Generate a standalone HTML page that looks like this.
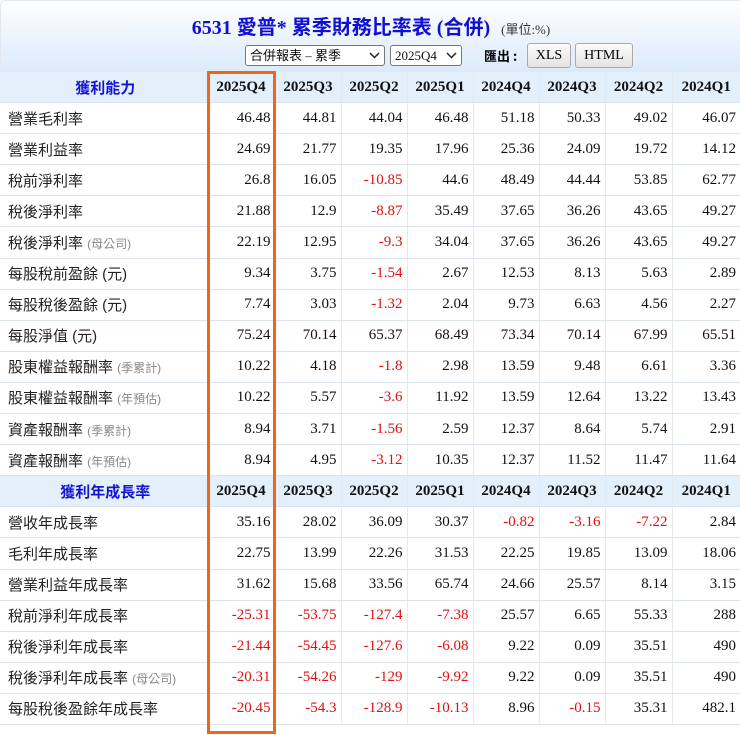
<!DOCTYPE html>
<html><head><meta charset="utf-8"><style>
body{margin:0;width:740px;height:735px;background:#fff;overflow:hidden;font-family:"Liberation Serif","Noto Serif CJK SC",serif;position:relative}
.top{position:absolute;left:0;top:0;width:740px;height:73px;background:linear-gradient(#fdfeff,#dbeafa);border-top:1px solid #e4e8ee;border-left:1px solid #e4e8ee;border-top-left-radius:6px;box-sizing:border-box}
.title{position:absolute;left:0;width:740px;top:10px;text-align:center;color:#1010d0;font-weight:bold;font-size:20px;font-family:"Liberation Serif","Noto Sans CJK TC",serif}
.title small{color:#333;font-weight:normal;font-size:13px;margin-left:6px}
.sel{position:absolute;top:44px;height:21px;border:1px solid #767676;border-radius:3px;background:#fff;font-size:13px;line-height:19px;padding-left:4px;box-sizing:border-box;color:#111;font-family:"Liberation Serif","Noto Sans CJK TC",serif}
.sel svg{position:absolute;right:4px;top:6px}
.btn{position:absolute;top:42px;height:25px;border:1px solid #aaa;border-radius:3px;background:linear-gradient(#fafafa,#e4e4e4);font-size:14px;line-height:23px;text-align:center;box-sizing:border-box}
table{position:absolute;left:0;top:72px;width:740px;border-collapse:collapse;table-layout:fixed}
td{height:30.1px;border-bottom:1px solid #dde3ea;border-right:1px solid #e5e9ee;padding:0 4px;text-align:right;font-size:15px;color:#111;white-space:nowrap;overflow:hidden}
td:first-child{text-align:left;font-family:"Liberation Sans","Noto Sans CJK TC",sans-serif;font-size:15px;color:#222;padding-left:8px}
td:last-child{border-right:none}
tr.h td{background:#e3effb;font-weight:bold;text-align:center;font-size:15px;color:#111}
tr.h td:first-child{text-align:center;color:#1515d0;font-weight:bold}
.r{color:#e01010}
.g{color:#888;font-size:12px}
.box{position:absolute;left:207px;top:71px;width:69px;height:663px;border:3px solid #f26418;box-sizing:border-box}
</style></head><body>
<div class="top">
<div class="title">6531 愛普* 累季財務比率表 (合併) <small>(單位:%)</small></div>
<div class="sel" style="left:244px;width:140px">合併報表 – 累季<svg width="11" height="7" viewBox="0 0 11 7"><path d="M1 1l4.5 4.5L10 1" fill="none" stroke="#222" stroke-width="1.5"/></svg></div>
<div class="sel" style="left:389px;width:72px">2025Q4<svg width="11" height="7" viewBox="0 0 11 7"><path d="M1 1l4.5 4.5L10 1" fill="none" stroke="#222" stroke-width="1.5"/></svg></div>
<div style="position:absolute;left:483px;top:45px;font-size:13px;font-weight:bold;font-family:'Noto Sans CJK TC',sans-serif">匯出 :</div>
<div class="btn" style="left:526px;width:44px">XLS</div>
<div class="btn" style="left:574px;width:58px">HTML</div>
</div>
<table>
<colgroup><col style="width:207px"><col style="width:68px"><col style="width:66px"><col style="width:66px"><col style="width:66px"><col style="width:66px"><col style="width:66px"><col style="width:67px"><col style="width:68px"></colgroup>
<tr class="h"><td>獲利能力</td><td>2025Q4</td><td>2025Q3</td><td>2025Q2</td><td>2025Q1</td><td>2024Q4</td><td>2024Q3</td><td>2024Q2</td><td>2024Q1</td></tr>
<tr><td>營業毛利率</td><td>46.48</td><td>44.81</td><td>44.04</td><td>46.48</td><td>51.18</td><td>50.33</td><td>49.02</td><td>46.07</td></tr>
<tr><td>營業利益率</td><td>24.69</td><td>21.77</td><td>19.35</td><td>17.96</td><td>25.36</td><td>24.09</td><td>19.72</td><td>14.12</td></tr>
<tr><td>稅前淨利率</td><td>26.8</td><td>16.05</td><td class="r">-10.85</td><td>44.6</td><td>48.49</td><td>44.44</td><td>53.85</td><td>62.77</td></tr>
<tr><td>稅後淨利率</td><td>21.88</td><td>12.9</td><td class="r">-8.87</td><td>35.49</td><td>37.65</td><td>36.26</td><td>43.65</td><td>49.27</td></tr>
<tr><td>稅後淨利率 <span class="g">(母公司)</span></td><td>22.19</td><td>12.95</td><td class="r">-9.3</td><td>34.04</td><td>37.65</td><td>36.26</td><td>43.65</td><td>49.27</td></tr>
<tr><td>每股稅前盈餘 (元)</td><td>9.34</td><td>3.75</td><td class="r">-1.54</td><td>2.67</td><td>12.53</td><td>8.13</td><td>5.63</td><td>2.89</td></tr>
<tr><td>每股稅後盈餘 (元)</td><td>7.74</td><td>3.03</td><td class="r">-1.32</td><td>2.04</td><td>9.73</td><td>6.63</td><td>4.56</td><td>2.27</td></tr>
<tr><td>每股淨值 (元)</td><td>75.24</td><td>70.14</td><td>65.37</td><td>68.49</td><td>73.34</td><td>70.14</td><td>67.99</td><td>65.51</td></tr>
<tr><td>股東權益報酬率 <span class="g">(季累計)</span></td><td>10.22</td><td>4.18</td><td class="r">-1.8</td><td>2.98</td><td>13.59</td><td>9.48</td><td>6.61</td><td>3.36</td></tr>
<tr><td>股東權益報酬率 <span class="g">(年預估)</span></td><td>10.22</td><td>5.57</td><td class="r">-3.6</td><td>11.92</td><td>13.59</td><td>12.64</td><td>13.22</td><td>13.43</td></tr>
<tr><td>資產報酬率 <span class="g">(季累計)</span></td><td>8.94</td><td>3.71</td><td class="r">-1.56</td><td>2.59</td><td>12.37</td><td>8.64</td><td>5.74</td><td>2.91</td></tr>
<tr><td>資產報酬率 <span class="g">(年預估)</span></td><td>8.94</td><td>4.95</td><td class="r">-3.12</td><td>10.35</td><td>12.37</td><td>11.52</td><td>11.47</td><td>11.64</td></tr>
<tr class="h"><td>獲利年成長率</td><td>2025Q4</td><td>2025Q3</td><td>2025Q2</td><td>2025Q1</td><td>2024Q4</td><td>2024Q3</td><td>2024Q2</td><td>2024Q1</td></tr>
<tr><td>營收年成長率</td><td>35.16</td><td>28.02</td><td>36.09</td><td>30.37</td><td class="r">-0.82</td><td class="r">-3.16</td><td class="r">-7.22</td><td>2.84</td></tr>
<tr><td>毛利年成長率</td><td>22.75</td><td>13.99</td><td>22.26</td><td>31.53</td><td>22.25</td><td>19.85</td><td>13.09</td><td>18.06</td></tr>
<tr><td>營業利益年成長率</td><td>31.62</td><td>15.68</td><td>33.56</td><td>65.74</td><td>24.66</td><td>25.57</td><td>8.14</td><td>3.15</td></tr>
<tr><td>稅前淨利年成長率</td><td class="r">-25.31</td><td class="r">-53.75</td><td class="r">-127.4</td><td class="r">-7.38</td><td>25.57</td><td>6.65</td><td>55.33</td><td>288</td></tr>
<tr><td>稅後淨利年成長率</td><td class="r">-21.44</td><td class="r">-54.45</td><td class="r">-127.6</td><td class="r">-6.08</td><td>9.22</td><td>0.09</td><td>35.51</td><td>490</td></tr>
<tr><td>稅後淨利年成長率 <span class="g">(母公司)</span></td><td class="r">-20.31</td><td class="r">-54.26</td><td class="r">-129</td><td class="r">-9.92</td><td>9.22</td><td>0.09</td><td>35.51</td><td>490</td></tr>
<tr><td>每股稅後盈餘年成長率</td><td class="r">-20.45</td><td class="r">-54.3</td><td class="r">-128.9</td><td class="r">-10.13</td><td>8.96</td><td class="r">-0.15</td><td>35.31</td><td>482.1</td></tr>
</table>
<div class="box"></div>
</body></html>
